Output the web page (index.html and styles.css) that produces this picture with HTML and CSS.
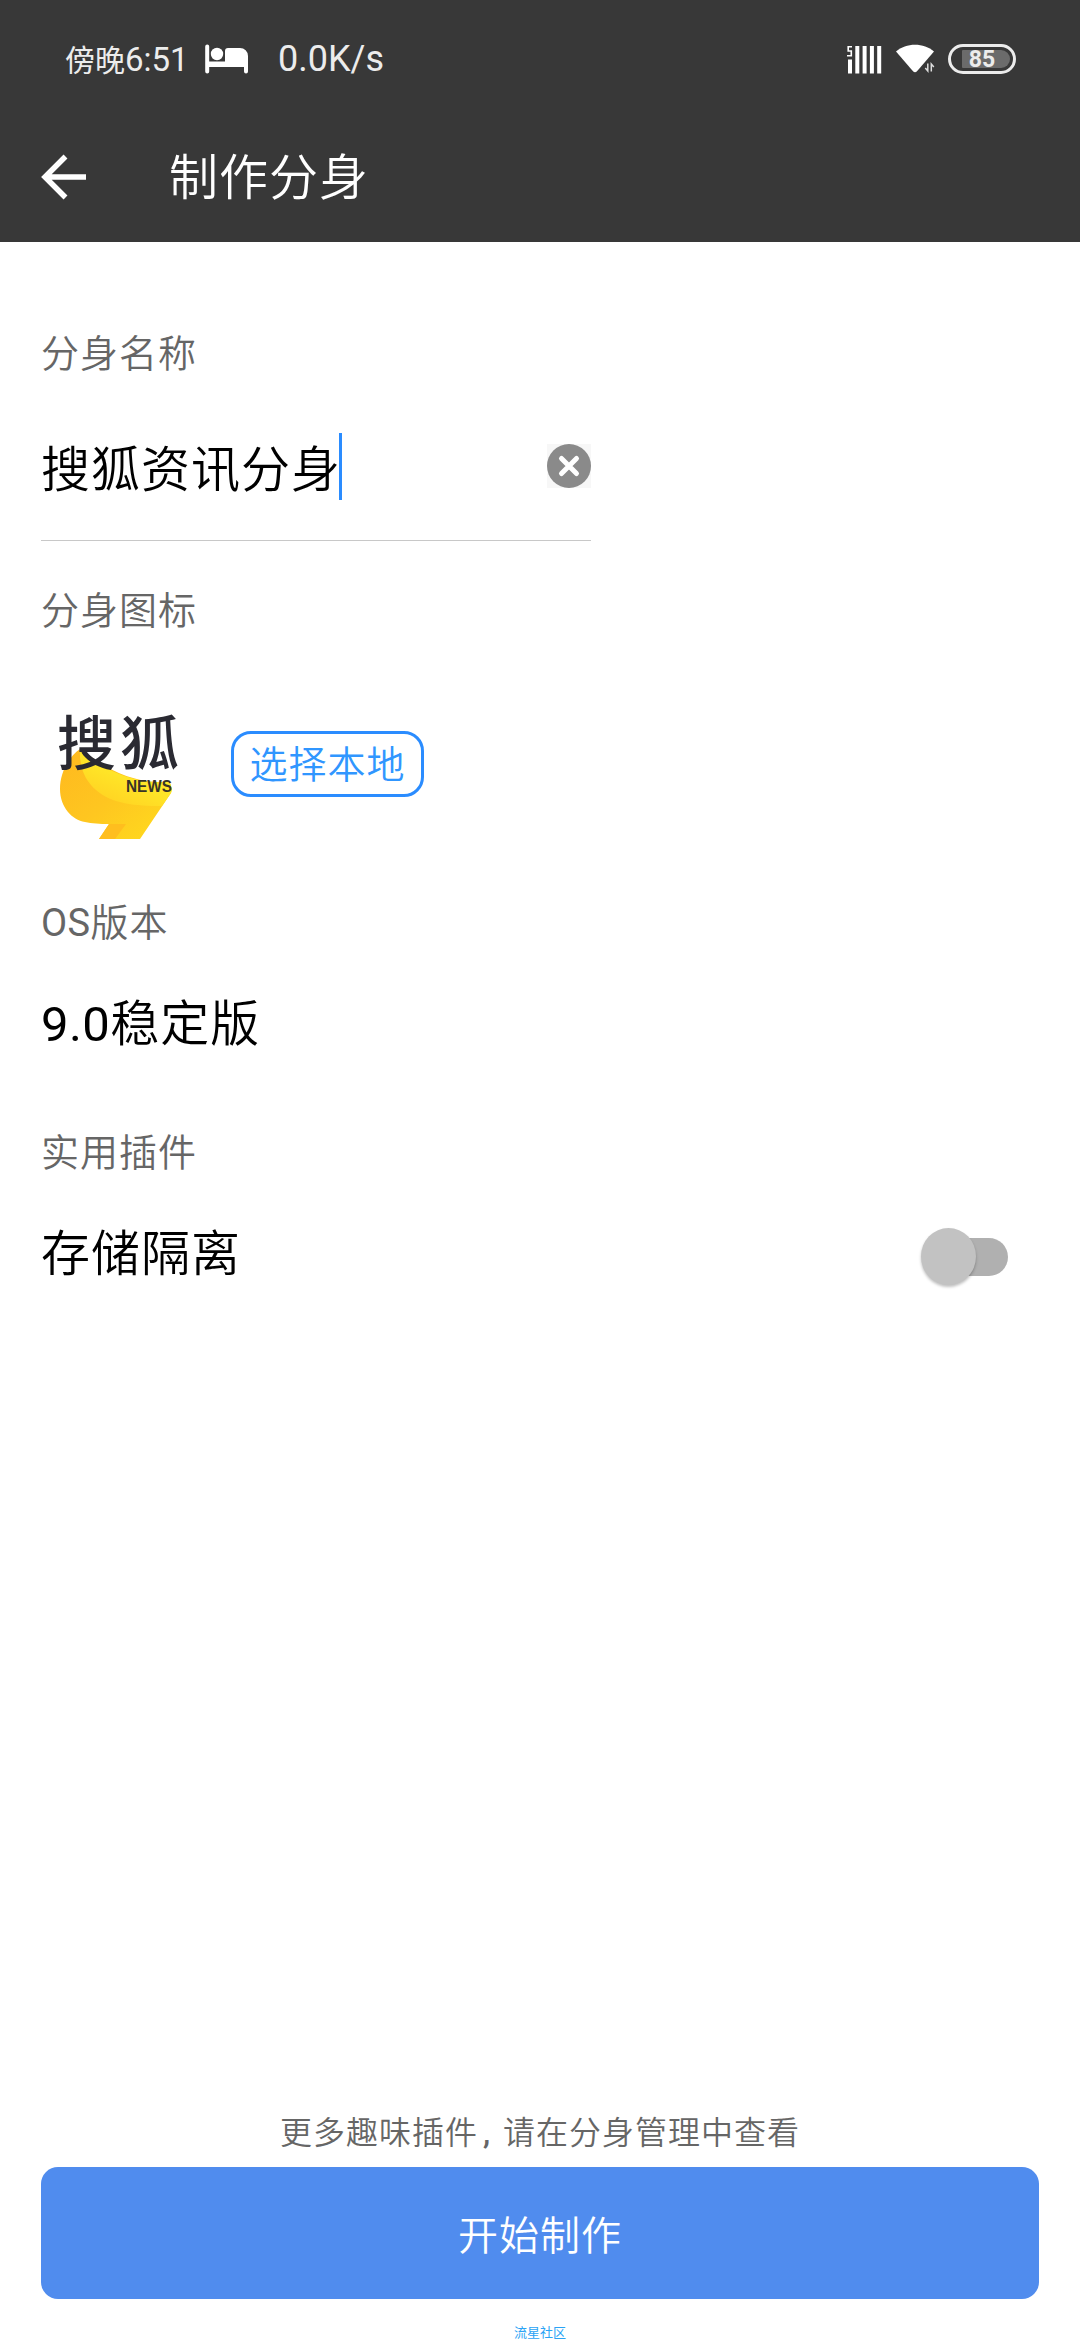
FILE: index.html
```html
<!DOCTYPE html>
<html lang="zh-CN">
<head>
<meta charset="utf-8">
<title>制作分身</title>
<link rel="stylesheet" href="styles.css">
</head>
<body>
<header class="top">
  <div class="status">
    <span class="clock">傍晚<span class="clock-digits">6:51</span></span>
    <svg class="bed" width="44" height="30" viewBox="0 0 44 30"><path fill="#fff" d="M2.200 .5a2 2 0 0 1 2 2V17.500H20V7a3 3 0 0 1 3-3H35a8 8 0 0 1 8 8V27.500a2 2 0 0 1-4 0V23H4.200V27.500a2 2 0 0 1-4 0V2.500a2 2 0 0 1 2-2z"/><circle cx="12" cy="10" r="6.200" fill="#fff"/></svg>
    <span class="speed">0.0K/s</span>
    <span class="spacer"></span>
    <svg class="signal" width="35" height="29" viewBox="0 0 35 29"><path fill="#fff" d="M1 14.500h4V28.500H1zM8.300 1h4v27.500h-4zM15.600 1h4v27.500h-4zM22.900 1h4v27.500h-4zM30.200 1h4v27.500h-4z"/><path d="M5 1.700H1.200V6H4.300V10.800H0" fill="none" stroke="#fff" stroke-width="1.600"/></svg>
    <svg class="wifi" width="40" height="30" viewBox="0 0 40 30"><path fill="#fff" d="M0 7.500C10-1.500 28-1.500 38 7.500L21 27.300q-2 2-4 0z"/><path d="M31.500 19v8l-3-3M35.500 28v-8l3 3" fill="none" stroke="#383838" stroke-width="4"/><path d="M31.800 19.500v7.500l-2.500-3M35.300 27.500v-7.500l2.500 3" fill="none" stroke="#ddd" stroke-width="1.500"/></svg>
    <span class="battery"><span class="battery-level">85</span></span>
  </div>
  <div class="bar">
    <svg class="back" width="46" height="46" viewBox="0 0 46 46"><path d="M24.500 2.500L4 23L24.500 43.500M4 23H45" fill="none" stroke="#fff" stroke-width="5.500"/></svg>
    <h1 class="title">制作分身</h1>
  </div>
</header>
<main class="form">
  <h2 class="label">分身名称</h2>
  <div class="field">
    <span class="value">搜狐资讯分身</span><span class="caret"></span>
    <svg class="clear" width="44" height="44" viewBox="0 0 44 44"><path fill="#f7f7f7" d="M0 0h44v44H0z"/><circle cx="22" cy="22" r="22" fill="#8a8a8a"/><path d="M14.500 14.500L29.500 29.500M29.500 14.500L14.500 29.500" stroke="#fff" stroke-width="5" stroke-linecap="round"/></svg>
  </div>
  <h2 class="label label-icon">分身图标</h2>
  <div class="icon-row">
    <svg class="logo" width="136" height="136" viewBox="0 0 136 136">
      <defs>
        <linearGradient id="deep" x1="0" y1="0" x2="1" y2="1"><stop offset="0" stop-color="#ffb81f"/><stop offset=".5" stop-color="#fec620"/><stop offset="1" stop-color="#ffdc1e"/></linearGradient>
        <linearGradient id="bright" x1="1" y1="0" x2=".3" y2="1"><stop offset="0" stop-color="#fff02a"/><stop offset=".6" stop-color="#ffe427"/><stop offset="1" stop-color="#ffd122"/></linearGradient>
      </defs>
      <path fill="url(#deep)" d="M30 39C20 46 10 61 10 79C10 97 22 110 35 112Q45 114 59 114L49 129H90L121 83Q123 78 119 71C94 76 60 62 40 46Q32 42 30 39z"/>
      <path fill="url(#bright)" d="M30 39C34 50 47 54 60 60C80 69 101 75 119 71Q123 78 121 83L112 96C85 96 62 94 46 80C34 70 29 55 30 39z"/>
      <path fill="#ffbe1e" d="M59 114H76L65 129H49z"/>
      <text class="logo-name" x="7 70" y="55">搜狐</text>
      <text class="logo-news" x="76" y="82" textLength="46" lengthAdjust="spacingAndGlyphs">NEWS</text>
    </svg>
    <button class="pick">选择本地</button>
  </div>
  <h2 class="label label-os"><span class="latin">OS</span>版本</h2>
  <p class="text"><span class="latin">9.0</span>稳定版</p>
  <h2 class="label label-plugin">实用插件</h2>
  <div class="switch-row">
    <p class="text">存储隔离</p>
    <span class="switch"><span class="thumb"></span></span>
  </div>
</main>
<footer class="footer">
  <p class="hint">更多趣味插件<span class="comma">,</span>请在分身管理中查看</p>
  <button class="start">开始制作</button>
  <p class="mark">流星社区</p>
</footer>
</body>
</html>
```
FILE: styles.css
```css
* { box-sizing: border-box; margin: 0; padding: 0; }
body {
  width: 1080px;
  height: 2340px;
  display: flex;
  flex-direction: column;
  background: #fff;
  color: #000;
  font-family: Roboto, "Noto Sans CJK SC", sans-serif;
  font-weight: 350;
  overflow: hidden;
}
svg { display: block; flex: none; }
.spacer { flex: 1; }
.latin { letter-spacing: .4px; font-weight: 400; }

.top { height: 242px; background: #383838; color: #fff; }
.status { height: 118px; display: flex; align-items: center; padding: 0 64px 0 65px; color: #ececec; }
.clock { width: 140px; margin-top: -2px; font-size: 30px; font-weight: 400; white-space: nowrap; }
.clock-digits { font-size: 33px; }
.speed { margin-left: 29px; font-size: 36px; font-weight: 400; }
.wifi { margin-left: 14px; }
.battery { width: 68px; height: 30px; margin-left: 12px; padding: 3px; border: 3px solid #ececec; border-radius: 15px; display: flex; justify-content: flex-end; }
.battery-level { width: 48px; height: 18px; border-radius: 1px 9px 9px 1px; background: #6b6b6b; font-size: 23px; font-weight: 700; line-height: 19px; text-align: center; padding-right: 8px; }
.bar { height: 118px; display: flex; align-items: center; padding-left: 41px; }
.title { margin: -7px 0 0 82px; font-size: 49px; letter-spacing: 1px; font-weight: 350; }

.form { flex: 1; padding: 82px 41px 0; }
.label { height: 60px; line-height: 60px; font-size: 38px; letter-spacing: 1px; font-weight: 350; color: #666; }
.field { width: 550px; height: 157px; display: flex; align-items: center; border-bottom: 1px solid #c8c8c8; padding-top: 8px; }
.value { margin-top: -2px; font-size: 49px; letter-spacing: 1px; }
.caret { width: 3px; height: 67px; background: #2a8cff; margin-left: -2px; }
.clear { margin-left: auto; }
.label-icon { margin-top: 40px; }
.icon-row { height: 136px; margin-top: 69px; padding-left: 9px; display: flex; align-items: center; }
.logo-name { font-size: 59px; font-weight: 500; fill: #2a2a32; }
.logo-news { font-family: "Liberation Sans", Arial, sans-serif; font-size: 16px; font-weight: 700; fill: #383428; }
.pick { width: 193px; height: 66px; margin: -28px 0 0 45px; border: 3px solid #2a8cff; border-radius: 20px; background: none; color: #3096ff; font: inherit; font-size: 38px; letter-spacing: 1px; white-space: nowrap; line-height: 58px; padding-top: 1px; }
.label-os { margin-top: 47px; }
.text { height: 72px; line-height: 72px; margin-top: 36px; font-size: 49px; letter-spacing: 1px; }
.label-plugin { margin-top: 62px; }
.switch-row { display: flex; align-items: center; justify-content: space-between; padding-right: 31px; }
.switch { width: 87px; height: 38px; margin-top: 39px; display: flex; align-items: center; border-radius: 19px; background: linear-gradient(to right, transparent 45%, #b0b0b0 45%); }
.thumb { width: 55px; height: 57px; flex: none; border-radius: 50%; background: #c2c2c2; box-shadow: 0 2px 3px rgba(0, 0, 0, .25); }

.footer { padding: 0 41px; text-align: center; }
.hint { height: 60px; line-height: 60px; margin-bottom: 4px; font-size: 32px; letter-spacing: 1px; color: #666; }
.comma { display: inline-block; width: 25px; text-align: left; padding-left: 5px; font-weight: 500; }
.start { display: block; width: 998px; height: 132px; border: 0; border-radius: 17px; background: #508cee; color: #fff; font: inherit; font-size: 40px; letter-spacing: 1px; }
.mark { height: 14px; line-height: 14px; margin-top: 27px; font-size: 13px; color: #2aa3f5; font-weight: 400; }
```
